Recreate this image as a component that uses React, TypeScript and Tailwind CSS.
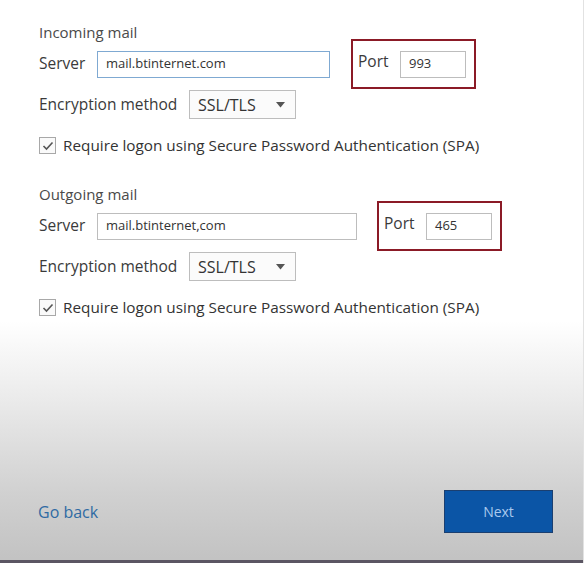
import React from "react"

const font = { fontFamily: '"Open Sans", "Noto Sans", sans-serif' }

function Select() {
  return (
    <div className="flex h-[29px] w-[107px] items-center justify-between border border-[#bdbdbd] bg-[#fbfbfb] pl-[8px] pr-[10px] text-[16px] text-[#333]">
      <span>SSL/TLS</span>
      <svg width="9" height="6" viewBox="0 0 9 6">
        <path d="M0 0 L9 0 L4.5 5.5 Z" fill="#555" />
      </svg>
    </div>
  )
}

function Check() {
  return (
    <div className="flex h-[17px] items-center gap-[7px] text-[15.3px] leading-[17px] text-[#333]">
      <div className="flex h-[17px] w-[17px] items-center justify-center border border-[#a8a8a8] bg-[#fafafa]">
        <svg width="12" height="10" viewBox="0 0 12 10">
          <path d="M1.5 5 L4.5 8 L10.5 1.5" fill="none" stroke="#555" strokeWidth="1.6" />
        </svg>
      </div>
      <span>Require logon using Secure Password Authentication (SPA)</span>
    </div>
  )
}

function Section({
  title,
  server,
  port,
  portGap,
  focused,
}: {
  title: string
  server: string
  port: string
  portGap: string
  focused?: boolean
}) {
  return (
    <div className="flex flex-col">
      <div className="h-[20px] text-[15px] leading-[20px] text-[#4a4a4a]">{title}</div>
      <div className="-mt-[3px] flex h-[50px] items-center">
        <span className="w-[58px] text-[15.5px] text-[#3a3a3a]">Server</span>
        <div
          className={
            focused
              ? "flex h-[27px] w-[233px] items-center border border-[#7fa9d2] bg-white pl-[8px] text-[13px] text-[#333]"
              : "flex h-[27px] w-[260px] items-center border border-[#bdbdbd] bg-white pl-[8px] text-[13px] text-[#333]"
          }
        >
          {server}
        </div>
        <div className={portGap}>
          <div className="flex h-[50px] w-[125px] items-center border-2 border-[#8b1a26] pl-[5px]">
            <span className="w-[42px] pb-[4px] text-[15.5px] text-[#3a3a3a]">Port</span>
            <div className="flex h-[27px] w-[66px] items-center border border-[#bdbdbd] bg-white pl-[8px] text-[13px] text-[#333]">
              {port}
            </div>
          </div>
        </div>
      </div>
      <div className="mt-px flex h-[29px] items-center">
        <span className="w-[150px] text-[15.5px] text-[#3a3a3a]">Encryption method</span>
        <Select />
      </div>
      <div className="mt-[18px]">
        <Check />
      </div>
    </div>
  )
}

export default function App() {
  return (
    <div
      style={font}
      className="flex h-[563px] w-[584px] flex-col overflow-hidden border-r border-[#e2e2e2] bg-[linear-gradient(to_bottom,#ffffff_0%,#ffffff_57%,#ececec_70%,#d0d0d0_88%,#c2c2c2_100%)]"
    >
      <div className="flex flex-1 flex-col pl-[39px] pt-[22px]">
        <Section title="Incoming mail" server="mail.btinternet.com" port="993" portGap="ml-[21px]" focused />
        <div className="mt-[30px]">
          <Section title="Outgoing mail" server="mail.btinternet,com" port="465" portGap="ml-[20px]" />
        </div>
      </div>
      <div className="flex items-center justify-between pb-[27px] pl-[38px] pr-[30px]">
        <span className="text-[16px] text-[#2f6aa3]">Go back</span>
        <div className="flex h-[43px] w-[109px] items-center justify-center border border-[#1b3f70] bg-[#0b55a6] text-[14px] text-[#a9c9ee]">
          Next
        </div>
      </div>
      <div className="h-[3px] bg-[#5b5663]" />
    </div>
  )
}
